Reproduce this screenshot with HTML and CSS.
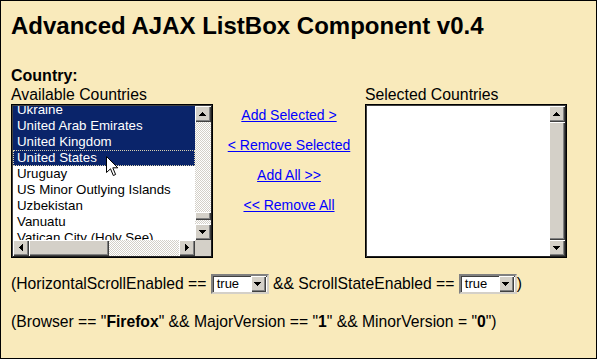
FILE: index.html
```html
<!DOCTYPE html>
<html>
<head>
<meta charset="utf-8">
<title>Advanced AJAX ListBox Component v0.4</title>
<link rel="stylesheet" href="styles.css">
</head>
<body>
<div class="page">
  <h1 class="title">Advanced AJAX ListBox Component v0.4</h1>
  <div class="field-label">Country:</div>
  <div class="picker">
    <div class="col">
      <div class="col-label">Available Countries</div>
      <div class="listbox listbox-h">
        <div class="lb-view">
          <ul class="lb-items">
            <li class="sel">Ukraine</li>
            <li class="sel">United Arab Emirates</li>
            <li class="sel">United Kingdom</li>
            <li class="sel focus">United States</li>
            <li>Uruguay</li>
            <li>US Minor Outlying Islands</li>
            <li>Uzbekistan</li>
            <li>Vanuatu</li>
            <li>Vatican City (Holy See)</li>
          </ul>
          <svg class="cursor" width="13" height="21" viewBox="0 0 13 21"><path d="M0.5 0.5 L0.5 16.5 L4.5 12.8 L7.3 19.5 L9.6 18.5 L6.8 11.8 L11.8 11.8 Z" fill="#fff" stroke="#000" stroke-width="1" stroke-linejoin="miter"/></svg>
        </div>
        <div class="vscroll">
          <div class="sb-btn"><svg width="7" height="4" viewBox="0 0 7 4"><path d="M3 0h1v1h1v1h1v1h1v1H0V3h1V2h1V1h1z"/></svg></div>
          <div class="track v-track"><div class="thumb v-thumb-small"></div></div>
          <div class="sb-btn"><svg width="7" height="4" viewBox="0 0 7 4"><path d="M0 0h7v1H6v1H5v1H4v1H3V3H2V2H1V1H0z"/></svg></div>
        </div>
        <div class="hscroll">
          <div class="sb-btn"><svg width="4" height="7" viewBox="0 0 4 7"><path d="M3 0h1v7H3V6H2V5H1V4H0V3h1V2h1V1h1z"/></svg></div>
          <div class="thumb h-thumb"></div>
          <div class="track h-track"></div>
          <div class="sb-btn"><svg width="4" height="7" viewBox="0 0 4 7"><path d="M0 0h1v1h1v1h1v1h1v1H3v1H2v1H1v1H0z"/></svg></div>
        </div>
        <div class="corner"></div>
      </div>
    </div>
    <div class="actions">
      <a href="#" class="action">Add Selected &gt;</a>
      <a href="#" class="action">&lt; Remove Selected</a>
      <a href="#" class="action">Add All &gt;&gt;</a>
      <a href="#" class="action">&lt;&lt; Remove All</a>
    </div>
    <div class="col">
      <div class="col-label">Selected Countries</div>
      <div class="listbox">
        <div class="lb-view"></div>
        <div class="vscroll">
          <div class="sb-btn"><svg width="7" height="4" viewBox="0 0 7 4"><path d="M3 0h1v1h1v1h1v1h1v1H0V3h1V2h1V1h1z"/></svg></div>
          <div class="thumb v-thumb-full"></div>
          <div class="sb-btn"><svg width="7" height="4" viewBox="0 0 7 4"><path d="M0 0h7v1H6v1H5v1H4v1H3V3H2V2H1V1H0z"/></svg></div>
        </div>
      </div>
    </div>
  </div>
  <p class="cond cond-first">(HorizontalScrollEnabled == <span class="dd"><span class="dd-text">true</span><span class="sb-btn dd-btn"><svg width="7" height="4" viewBox="0 0 7 4"><path d="M0 0h7v1H6v1H5v1H4v1H3V3H2V2H1V1H0z"/></svg></span></span> &amp;&amp; ScrollStateEnabled == <span class="dd"><span class="dd-text">true</span><span class="sb-btn dd-btn"><svg width="7" height="4" viewBox="0 0 7 4"><path d="M0 0h7v1H6v1H5v1H4v1H3V3H2V2H1V1H0z"/></svg></span></span>)</p>
  <p class="cond cond-second">(Browser == "<b>Firefox</b>" &amp;&amp; MajorVersion == "<b>1</b>" &amp;&amp; MinorVersion = "<b>0</b>")</p>
</div>
</body>
</html>
```

FILE: styles.css
```css
html, body {
  margin: 0;
  padding: 0;
  background: #f9eabb;
}

.page {
  width: 597px;
  height: 359px;
  box-sizing: border-box;
  border: 1px solid #000;
  background: #f9eabb;
  padding: 0 10px;
  font-family: "Liberation Sans", Arial, sans-serif;
  color: #000;
  overflow: hidden;
}

.title {
  margin: 11px 0 0;
  font-size: 24px;
  line-height: 28px;
  font-weight: bold;
}

.field-label {
  margin-top: 26px;
  font-size: 16px;
  line-height: 19px;
  font-weight: bold;
}

.picker {
  display: flex;
}

.col {
  width: 202px;
  display: flex;
  flex-direction: column;
}

.col-label {
  font-size: 15.8px;
  line-height: 19px;
  white-space: nowrap;
}

.listbox {
  width: 202px;
  height: 154px;
  box-sizing: border-box;
  border: 1px solid #000;
  box-shadow: inset 1px 1px 0 #404040, inset -1px -1px 0 #202020;
  padding: 1px;
  background: #fff;
  display: grid;
  grid-template-columns: 1fr 16px;
  grid-template-rows: 1fr;
}

.listbox-h {
  grid-template-rows: 1fr 16px;
}

.lb-view {
  position: relative;
  overflow: hidden;
  background: #fff;
}

.lb-items {
  list-style: none;
  margin: -4px 0 0;
  padding: 0;
  font-size: 13.3px;
  line-height: 16px;
}

.lb-items li {
  padding-left: 4px;
  white-space: nowrap;
  height: 16px;
}

.lb-items li.sel {
  background: #0a246a;
  color: #fff;
}

.lb-items li.focus {
  outline: 1px dotted #d8d0b0;
  outline-offset: -1px;
}

.cursor {
  position: absolute;
  left: 93px;
  top: 50px;
}

.vscroll {
  display: flex;
  flex-direction: column;
}

.hscroll {
  display: flex;
}

.sb-btn {
  width: 16px;
  height: 16px;
  flex: none;
  box-sizing: border-box;
  background: #d4d0c8;
  box-shadow: inset 1px 1px 0 #fff, inset -1px -1px 0 #404040, inset -2px -2px 0 #808080;
  display: flex;
  align-items: center;
  justify-content: center;
}

.sb-btn svg {
  display: block;
  fill: #000;
  margin: -1px 0 0 -1px;
}

.track {
  background: repeating-conic-gradient(#d4d0c8 0 25%, #fff 0 50%) 0 0 / 2px 2px;
}

.v-track {
  flex: 1;
  display: flex;
  flex-direction: column;
  justify-content: flex-end;
  padding-bottom: 4px;
}

.h-track {
  flex: 1;
}

.thumb {
  background: #d4d0c8;
  box-shadow: inset 1px 1px 0 #fff, inset -1px -1px 0 #404040, inset -2px -2px 0 #808080;
}

.v-thumb-small {
  height: 8px;
}

.v-thumb-full {
  flex: 1;
}

.h-thumb {
  width: 80px;
  flex: none;
}

.corner {
  background: #d4d0c8;
}

.actions {
  width: 152px;
  padding-top: 22px;
  display: flex;
  flex-direction: column;
  align-items: center;
  gap: 14px;
}

.action {
  font-size: 14px;
  line-height: 16px;
  color: #0000ff;
  text-decoration: underline;
  white-space: nowrap;
}

.cond {
  margin: 0;
  font-size: 15.7px;
  line-height: 20px;
  white-space: nowrap;
}

.cond-first {
  margin-top: 16px;
}

.cond-second {
  margin-top: 18px;
}

.dd {
  display: inline-flex;
  vertical-align: top;
  width: 58px;
  height: 20px;
  box-sizing: border-box;
  border: 2px solid;
  border-color: #808080 #d4d0c8 #d4d0c8 #808080;
  box-shadow: inset 1px 1px 0 #404040;
  background: #fff;
  padding: 0 1px 0 0;
}

.dd-text {
  flex: 1;
  font-size: 13px;
  line-height: 16px;
  padding-left: 4px;
}

.dd-btn {
  width: 15px;
}
```
